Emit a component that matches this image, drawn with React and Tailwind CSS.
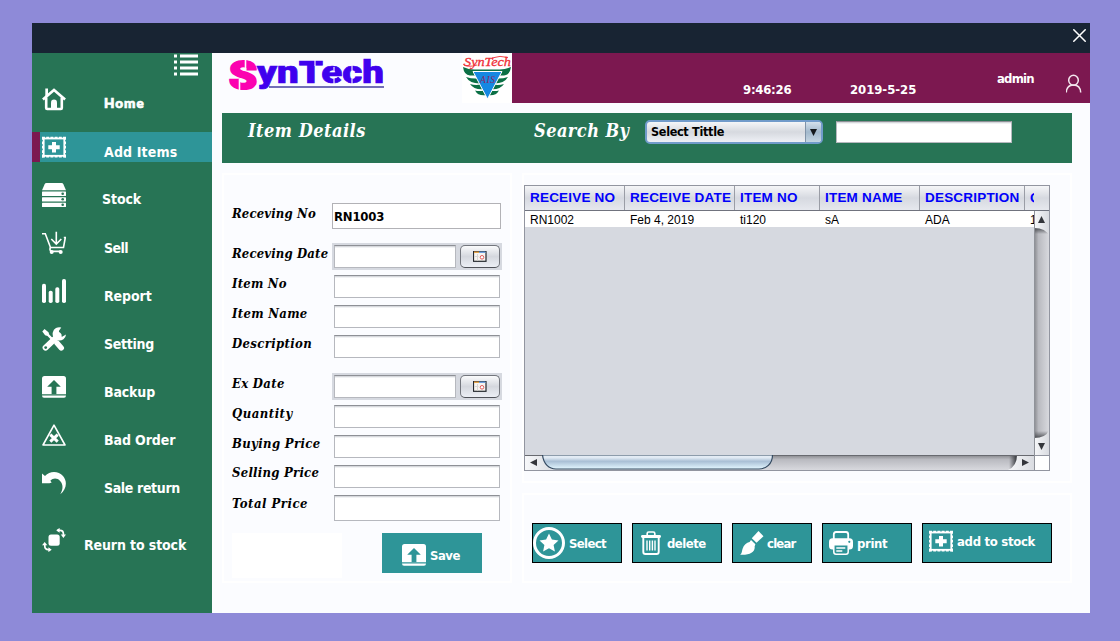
import React from "react";

const SANS_FACE = "font-['DejaVu_Sans_Condensed','DejaVu_Sans',sans-serif] font-bold [font-stretch:condensed]";
const SANS = `${SANS_FACE} tracking-[-0.2px]`;
const SERIF = "font-['DejaVu_Serif_Condensed','DejaVu_Serif',serif] font-bold italic [font-stretch:condensed]";

function HomeIcon() {
  return (
    <svg width="24" height="24" viewBox="0 0 24 24" fill="none" stroke="white">
      <path d="M.9 12.600 12 3l11.100 9.600" strokeWidth="2.600" />
      <path d="M4.200 10.500v10.600q0 .9.900.9h13.800q.9 0 .9-.9V10.500" strokeWidth="2.600" />
      <path d="M3.300 1.500v7.500h2.700V1.500z" fill="white" stroke="none" />
      <path d="M9 22v-6.200Q9 12.600 12 12.600t3 3.200V22z" fill="white" stroke="none" />
    </svg>
  );
}

function AddIcon() {
  return (
    <svg width="24" height="24" viewBox="0 0 24 24" fill="none" stroke="white">
      <rect x="1.700" y="3.500" width="20.600" height="17.300" strokeWidth="1.800" />
      <path d="M0 2.700h24M0 21.600h24" strokeWidth="1.900" strokeDasharray="3 1.200" />
      <path d="M.8 2v20.500M23.200 2v20.500" strokeWidth="1.700" strokeDasharray="2.800 1.600" />
      <path d="M12 7v10.600M6.300 12.300h11.400" strokeWidth="4" />
    </svg>
  );
}

function StockIcon() {
  return (
    <svg width="24" height="24" viewBox="0 0 24 24" fill="white">
      <path d="M4.500 0h15q1.400 0 2 1.400L24 7.300H0l2.500-5.900Q3.100 0 4.500 0z" />
      <rect x="0" y="8.600" width="24" height="4.400" rx=".5" />
      <rect x="0" y="14.200" width="24" height="4.200" rx=".5" />
      <rect x="0" y="19.700" width="24" height="4.300" rx=".5" />
      <g fill="#277455">
        <circle cx="20.700" cy="10.800" r="1.300" />
        <circle cx="20.700" cy="16.300" r="1.300" />
        <circle cx="20.700" cy="21.800" r="1.300" />
      </g>
    </svg>
  );
}

function SellIcon() {
  return (
    <svg width="24" height="24" viewBox="0 0 24 24" fill="none" stroke="white" strokeWidth="1.600">
      <path d="M0 2.800h3.300L8.500 16.500h13L23.300 6.500h-1.500" />
      <path d="M14.300 .8v12M9.300 8l5 5 5-5" />
      <path d="M8.500 16.500q-1.500 2.500 1 3.900h9" />
      <circle cx="9.700" cy="20.900" r="2" fill="white" stroke="none" />
      <circle cx="18.700" cy="20.900" r="2" fill="white" stroke="none" />
    </svg>
  );
}

function ReportIcon() {
  return (
    <svg width="24" height="24" viewBox="0 0 24 24" fill="white">
      <rect x="0" y="4.800" width="4" height="19.200" rx="1.800" />
      <rect x="6.700" y="11.700" width="4" height="12.300" rx="1.800" />
      <rect x="13.300" y="8.300" width="4" height="15.700" rx="1.800" />
      <rect x="20" y="0" width="4" height="24" rx="1.800" />
    </svg>
  );
}

function SettingIcon() {
  return (
    <svg width="24" height="24" viewBox="0 0 24 24" fill="none" stroke="white">
      <path d="M.3 4.500 2.500 2l4 3.200.7 2.400 5 5-1.700 1.700-5-5.200L3.100 8.200z" fill="white" stroke="none" />
      <path d="M15 16l4.300 5" strokeWidth="5.400" strokeLinecap="round" />
      <path d="M3.600 20.600 16.500 8.300" strokeWidth="6" strokeLinecap="round" />
      <path d="M19.300 .5a6.700 6.700 0 1 0 4.700 6.900l-3.900 2.300-3.200-2.300.1-3.700z" fill="white" stroke="none" />
      <circle cx="3.700" cy="20.600" r="1.400" fill="#277455" stroke="none" />
    </svg>
  );
}

function UploadIcon({ hole = "#277455" }) {
  return (
    <svg width="24" height="24" viewBox="0 0 24 24" fill="white">
      <path d="M2.500 1h19Q24 1 24 3.500v15.700H0V3.500Q0 1 2.500 1z" />
      <path d="M0 20.400h24q0 2.400-2 2.400H2Q0 22.800 0 20.400z" />
      <path d="M12 5 18.800 11.700H14.400V19.200H9.600V11.700H5.200z" fill={hole} />
    </svg>
  );
}

function BadOrderIcon() {
  return (
    <svg width="24" height="24" viewBox="0 0 24 24" fill="none" stroke="white">
      <path d="M12 2.200 23 22H1z" strokeWidth="1.600" strokeLinejoin="round" />
      <path d="M8.300 11.600l7.400 7M15.700 11.600l-7.400 7" strokeWidth="3" />
    </svg>
  );
}

function SaleReturnIcon() {
  return (
    <svg width="24" height="24" viewBox="0 0 24 24" fill="white">
      <path d="M0 2.500 3 5C8 -.5 16.500 0 21 4.900c4.700 5.500 3.500 13.200-2.700 18.400 3-5.500 2.900-10-.2-13.300-2.800-3-6.800-3.300-9.800-.2l1.400 1.700L7.500 12.300H0z" />
    </svg>
  );
}

function ReturnStockIcon() {
  return (
    <svg width="24" height="24" viewBox="0 0 24 24" fill="none" stroke="white" strokeWidth="1.700">
      <rect x="6.500" y="6.500" width="11.200" height="11.200" rx="2.500" fill="white" stroke="none" />
      <path d="M15.500 2.300h2.500q3.400 0 3.400 3.500v1.500" />
      <path d="M14.200 2.300l3.400-2.400v4.800zM21.400 10l-2.600-3.400H24z" fill="white" stroke="none" />
      <path d="M8 21.600H6.300q-3.500 0-3.500-3.600v-1.500" />
      <path d="M9.700 21.700l-3.300 2.400v-4.800zM2.700 13.900 0 17.300h5.300z" fill="white" stroke="none" />
    </svg>
  );
}

const HOME_FACE = "font-['Lato',sans-serif] font-black text-[13.5px] tracking-[1px] [-webkit-text-stroke:0.7px_white]";
const NAV_FACE = `text-[14px] ${SANS_FACE}`;

const NAV = [
  { label: "Home", Icon: HomeIcon, row: "", text: `ml-[38px] mt-[9px] ${HOME_FACE}` },
  { label: "Add Items", Icon: AddIcon, row: "mt-[18px] bg-[#2e9598]", text: `ml-[38px] mt-[10px] tracking-[0.15px] ${NAV_FACE}` },
  { label: "Stock", Icon: StockIcon, row: "mt-[18px]", text: `ml-9 mt-[9px] tracking-[-0.1px] ${NAV_FACE}` },
  { label: "Sell", Icon: SellIcon, row: "mt-[18px]", text: `ml-[38px] mt-[10px] tracking-[-0.6px] ${NAV_FACE}` },
  { label: "Report", Icon: ReportIcon, row: "mt-[18px]", text: `ml-[38px] mt-[10px] tracking-[-0.1px] ${NAV_FACE}` },
  { label: "Setting", Icon: SettingIcon, row: "mt-[18px]", text: `ml-[38px] mt-[10px] tracking-[-0.3px] ${NAV_FACE}` },
  { label: "Backup", Icon: UploadIcon, row: "mt-[18px]", text: `ml-[38px] mt-[10px] tracking-[-0.15px] ${NAV_FACE}` },
  { label: "Bad Order", Icon: BadOrderIcon, row: "mt-[18px]", text: `ml-[38px] mt-[10px] tracking-[-0.1px] ${NAV_FACE}` },
  { label: "Sale return", Icon: SaleReturnIcon, row: "mt-[18px]", text: `ml-[38px] mt-[10px] tracking-[-0.35px] ${NAV_FACE}` },
  { label: "Reurn to stock", Icon: ReturnStockIcon, row: "mt-[27px]", text: `ml-[18px] mt-[10px] tracking-[-0.12px] ${NAV_FACE}` },
];

function Sidebar() {
  return (
    <nav className="flex w-[180px] shrink-0 flex-col bg-[#277455]">
      <div className="flex h-[31px] justify-end pr-[14px]">
        <svg width="24" height="24" viewBox="0 0 24 24" fill="none" stroke="white" strokeWidth="3">
          <path d="M6 3h18M6 9h18M6 15h18M6 21h18" />
          <path d="M0 3h3M0 9h3M0 15h3M0 21h3" />
        </svg>
      </div>
      {NAV.map(({ label, Icon, row, text }, i) => (
        <div key={label} className={`flex h-[30px] items-start ${row}`}>
          <span className={i === 1 ? "h-full w-2 bg-[#7c1850]" : "h-full w-2"} />
          <span className="ml-0.5 mt-[3px] h-6 w-6 shrink-0"><Icon /></span>
          <span className={`whitespace-nowrap leading-5 text-white ${text}`}>{label}</span>
        </div>
      ))}
    </nav>
  );
}

function Logo() {
  return (
    <svg width="250" height="50" viewBox="0 0 250 50">
      <g fontFamily="Roboto, sans-serif" fontWeight="900">
        <text x="17" y="35.500" fontSize="39" textLength="28" lengthAdjust="spacingAndGlyphs" fill="#fb02b0" stroke="#fb02b0" strokeWidth="2.200">S</text>
        <text x="45" y="29.500" fontSize="31" textLength="127" lengthAdjust="spacingAndGlyphs" fill="#3f00ee" stroke="#3f00ee" strokeWidth=".7">ynTech</text>
      </g>
      <path d="M33.500 4v12M27.500 26v14" stroke="#fbfcff" strokeWidth="1.600" />
      <path d="M103 6v7M122 14v5M122 25v6M140 12v6M140 24v7" stroke="#fbfcff" strokeWidth="1.100" />
      <path d="M57 34h115" stroke="#45419f" strokeWidth="1.600" />
    </svg>
  );
}

function Emblem() {
  return (
    <svg width="50" height="50" viewBox="0 0 50 50" className="bg-white">
      <g fill="#0b7045">
        <path d="M1 14q7 3 13 2.500h22q6 .5 13-2.500-1 8-7 8.500H8Q2 22 1 14z" />
        <path d="M4 24q6 2 12 1.500l3 5Q8 31 4 24zM46 24q-6 2-12 1.500l-3 5Q42 31 46 24z" />
        <path d="M8 31q5 1.500 11 .5l2.500 4.700Q12 37 8 31zM42 31q-5 1.500-11 .5l-2.500 4.700Q38 37 42 31z" />
        <path d="M13 37.500q4 1 8.500.2l2.500 4.500q-8 1-11-4.700zM37 37.500q-4 1-8.500.2l-2.500 4.500q8 1 11-4.700z" />
      </g>
      <path d="M11 18.500h29L25.500 46z" fill="#1688e2" stroke="white" strokeWidth="1" />
      <text x="18" y="30" fontFamily="Liberation Serif, serif" fontStyle="italic" fontSize="9.500" textLength="15" fill="#8b2868">AIS</text>
      <text x="2" y="13" fontFamily="Liberation Serif, serif" fontStyle="italic" fontSize="13" textLength="47" lengthAdjust="spacingAndGlyphs" fill="#ef3038" stroke="#ef3038" strokeWidth=".3">SynTech</text>
      <path d="M1 11q4 4 14 1M30 5q8-3 16-.5" fill="none" stroke="#ef3038" strokeWidth=".9" />
    </svg>
  );
}

function Header() {
  return (
    <header className="flex h-[50px]">
      <div className="flex w-[300px] shrink-0"><Logo /><Emblem /></div>
      <div className={`flex flex-1 items-start bg-[#7c1850] text-[13px] leading-4 text-white ${SANS_FACE}`}>
        <span className="ml-[231px] mt-[29px] w-[107px] tracking-[-0.25px]">9:46:26</span>
        <span className="mt-[29px] w-[147px] tracking-[-0.05px]">2019-5-25</span>
        <span className="mt-[18px] w-[69px] tracking-[-0.8px]">admin</span>
        <svg width="16" height="19" viewBox="0 0 16 19" className="mt-[21px]" fill="none" stroke="#f3e6ee" strokeWidth="1.500">
          <ellipse cx="7.500" cy="6.300" rx="4.800" ry="5" />
          <path d="M.3 18.500q.4-7.500 7.200-7.500t7.200 7.500" />
        </svg>
      </div>
    </header>
  );
}

const INPUT = "border border-[#b6b8be] border-t-[#8e9096] bg-white shadow-[inset_0_1px_0_#d6d8dc,inset_0_2px_0_#f1f2f4]";

function SearchBar() {
  return (
    <div className="mx-[10px] mt-[10px] flex h-[50px] w-[850px] items-start bg-[#277455]">
      <span className={`ml-[26px] mt-[6px] w-[286px] whitespace-nowrap text-[18px] leading-6 tracking-[0.5px] text-white ${SERIF}`}>Item Details</span>
      <span className={`mt-[6px] w-[111px] whitespace-nowrap text-[18px] leading-6 tracking-[0.45px] text-white ${SERIF}`}>Search By</span>
      <div className="mt-[7px] flex h-[24px] w-[178px] items-center overflow-hidden rounded-[5px] border-2 border-[#719bca] bg-linear-to-b from-[#f5f6f8] via-[#d6d9df] to-[#eef0f5]">
        <span className={`flex-1 whitespace-nowrap pl-1 pt-px text-[12.5px] text-black ${SANS_FACE} tracking-[-0.3px]`}>Select Tittle</span>
        <span className="flex h-full w-4 items-center justify-center border-l border-[#8093a8] bg-linear-to-b from-[#d5e1ec] via-[#a2b8cc] to-[#c4d5e2]">
          <svg width="7" height="7" viewBox="0 0 7 7"><path d="M0 0h7L3.500 7z" fill="#15181c" /></svg>
        </span>
      </div>
      <div className={`ml-[13px] mt-2 h-[22px] w-[176px] ${INPUT}`} />
    </div>
  );
}

function DateField() {
  return (
    <div className="flex h-[27px] w-[170px] items-start gap-1 bg-[#d6d9e0] px-0.5 pt-0.5">
      <div className={`h-[23px] w-[122px] ${INPUT}`} />
      <div className="flex h-[23px] w-10 items-center justify-center rounded-[5px] border border-[#73767d] border-b-[#4f5258] bg-linear-to-b from-[#fafbfc] via-[#d5d8de] to-[#eceff5]">
        <svg width="14" height="11" viewBox="0 0 14 11">
          <rect x=".5" y=".5" width="12.500" height="9.800" fill="#f7f4f0" stroke="#24282e" strokeWidth="1.200" />
          <path d="M1 .5h5v1.500H1z" fill="#e3a34b" />
          <path d="M6 .5h6.500v1.500H6z" fill="#6fa2de" />
          <path d="M4.500 3v6.500M1.500 5.500h4" stroke="#d8d6d4" />
          <circle cx="9" cy="6.300" r="1.800" fill="white" stroke="#e0605c" />
        </svg>
      </div>
    </div>
  );
}

const FIELDS = [
  { label: "Receving No", kind: "value", row: "", text: "mt-px tracking-[0.15px]" },
  { label: "Receving Date", kind: "date", row: "mt-[14px]", text: "mt-px tracking-[0.15px]" },
  { label: "Item No", kind: "text", row: "mt-[5px]", text: "-mt-px tracking-[0.2px]" },
  { label: "Item Name", kind: "text", row: "mt-[7px]", text: "-mt-px tracking-[0.3px]" },
  { label: "Description", kind: "text", row: "mt-[7px]", text: "-mt-px tracking-[0.35px]" },
  { label: "Ex Date", kind: "date", row: "mt-[15px]", text: "mt-px tracking-[0.3px]" },
  { label: "Quantity", kind: "text", row: "mt-[5px]", text: "-mt-px tracking-[0.5px]" },
  { label: "Buying Price", kind: "text", row: "mt-[7px]", text: "-mt-px tracking-[0.35px]" },
  { label: "Selling Price", kind: "text", row: "mt-[7px]", text: "-mt-0.5 tracking-[0.25px]" },
  { label: "Total Price", kind: "tall", row: "mt-[7px]", text: "-mt-px tracking-[0.5px]" },
];

const ROW_HEIGHT = { value: "h-[26px]", date: "h-[27px]", text: "h-[23px]", tall: "h-[26px]" };

function ItemForm() {
  return (
    <section className="flex h-[410px] w-[290px] flex-col border-2 border-white pl-2 pt-[28px]">
      {FIELDS.map((f) => (
        <div key={f.label} className={`flex shrink-0 items-start ${ROW_HEIGHT[f.kind]} ${f.row}`}>
          <span className={`w-[100px] shrink-0 whitespace-nowrap text-[13px] leading-5 text-black ${SERIF} ${f.text}`}>{f.label}</span>
          {f.kind === "value" && (
            <div className={`flex h-[26px] w-[169px] items-center border border-[#b2b2b6] bg-white pl-px pt-px text-[13px] text-black ${SANS}`}>RN1003</div>
          )}
          {f.kind === "date" && <DateField />}
          {f.kind === "text" && <div className={`ml-0.5 h-[23px] w-[166px] ${INPUT}`} />}
          {f.kind === "tall" && <div className={`ml-0.5 h-[26px] w-[166px] ${INPUT}`} />}
        </div>
      ))}
      <div className="mt-3 flex shrink-0 items-start">
        <div className="h-[45px] w-[110px] bg-white" />
        <button className={`ml-10 flex h-10 w-[100px] items-center gap-1 bg-[#2e9598] pl-5 pt-1 text-[13px] text-white ${SANS_FACE} tracking-[-0.5px]`}>
          <UploadIcon hole="#2e9598" />
          <span className="pt-0.5">Save</span>
        </button>
      </div>
    </section>
  );
}

const COLS = "grid grid-cols-[100px_110px_85px_100px_105px_1fr]";

function ItemTable() {
  return (
    <div className="flex h-[286px] w-[526px] flex-col border border-[#9295a0] font-['Liberation_Sans',Arial,sans-serif]">
      <div className="h-[25px] shrink-0 border-b border-[#70737e] bg-linear-to-b from-[#f5f6f8] via-[#d6d9e0] to-[#e6e8ee]">
        <div className={`h-6 w-[509px] overflow-hidden text-[13.5px] font-bold leading-6 tracking-[0.2px] text-[#0000fa] ${COLS}`}>
          {["RECEIVE NO", "RECEIVE DATE", "ITEM NO", "ITEM NAME", "DESCRIPTION"].map((h) => (
            <span key={h} className="overflow-hidden whitespace-nowrap border-r border-[#9a9da6] pl-[5px]">{h}</span>
          ))}
          <span className="overflow-hidden pl-[5px]">Q</span>
        </div>
      </div>
      <div className="flex h-[244px] shrink-0">
        <div className="w-[509px] bg-[#d6d9e0]">
          <div className={`h-4 overflow-hidden bg-white text-[12px] leading-[18px] text-black ${COLS}`}>
            {["RN1002", "Feb 4, 2019", "ti120", "sA", "ADA", "1"].map((c, i) => (
              <span key={i} className="overflow-hidden whitespace-nowrap pl-[5px]">{c}</span>
            ))}
          </div>
        </div>
        <svg width="15" height="244" viewBox="0 0 15 244">
          <defs>
            <linearGradient id="vtrack"><stop offset="0" stopColor="#85868b" /><stop offset=".3" stopColor="#b9bac0" /><stop offset="1" stopColor="#d8d9de" /></linearGradient>
            <linearGradient id="cap"><stop offset="0" stopColor="#f7f8fa" /><stop offset="1" stopColor="#d9dbe0" /></linearGradient>
            <linearGradient id="vshadow" x1="0" y1="0" x2="0" y2="1"><stop offset="0" stopColor="#404247" /><stop offset="1" stopColor="#404247" stopOpacity="0" /></linearGradient>
          </defs>
          <rect width="15" height="244" fill="url(#vtrack)" />
          <rect y="16" width="15" height="7" fill="url(#vshadow)" />
          <rect y="-228" width="15" height="8" fill="url(#vshadow)" transform="scale(1 -1)" />
          <path d="M0 0h15v25Q12 17 0 17z" fill="url(#cap)" />
          <path d="M0 244h15v-25Q12 227 0 227z" fill="url(#cap)" />
          <path d="M7.500 5 11 12H4z" fill="#34363b" />
          <path d="M7.500 239 11 232H4z" fill="#34363b" />
          <path d="M.5 0v244" stroke="#8f9299" />
        </svg>
      </div>
      <div className="flex h-[15px] bg-white">
        <svg width="510" height="15" viewBox="0 0 510 15">
          <defs>
            <linearGradient id="htrack" x1="0" y1="0" x2="0" y2="1"><stop offset="0" stopColor="#85868b" /><stop offset=".3" stopColor="#b9bac0" /><stop offset="1" stopColor="#d8d9de" /></linearGradient>
            <linearGradient id="thumb" x1="0" y1="0" x2="0" y2="1"><stop offset="0" stopColor="#e8eff7" /><stop offset=".2" stopColor="#dfe9f3" /><stop offset=".45" stopColor="#a9bfd5" /><stop offset="1" stopColor="#e3f7ff" /></linearGradient>
            <linearGradient id="hshadow"><stop offset="0" stopColor="#404247" stopOpacity="0" /><stop offset="1" stopColor="#303237" /></linearGradient>
          </defs>
          <rect width="510" height="15" fill="url(#htrack)" />
          <rect x="484" width="8" height="15" fill="url(#hshadow)" />
          <path d="M0 0h18q1 11 12 15H0z" fill="url(#cap)" />
          <path d="M510 0h-18q0 11-9 15h27z" fill="url(#cap)" />
          <path d="M17.500 0C18.500 9 24 14 31 14H234C241 14 247.500 9 247.500 0z" fill="url(#thumb)" stroke="#344a61" strokeWidth="1.200" />
          <path d="M5 7.500 12 4v7zM504 7.500 497 4v7z" fill="#34363b" />
          <path d="M0 .5h17M248 .5h262" stroke="#686a70" />
          <path d="M509.500 0v15" stroke="#8f9299" />
        </svg>
        <div className="flex-1 border-t border-[#9295a0]" />
      </div>
    </div>
  );
}

function StarIcon() {
  return (
    <svg width="32" height="32" viewBox="0 0 32 32" fill="white">
      <circle cx="16" cy="16" r="14.500" fill="none" stroke="white" strokeWidth="3" />
      <path d="M16 6.500l2.900 6.100 6.600.8-4.900 4.500 1.300 6.600-5.900-3.300-5.900 3.300 1.300-6.600-4.900-4.500 6.600-.8z" />
    </svg>
  );
}

function TrashIcon() {
  return (
    <svg width="20" height="24" viewBox="0 0 20 24" fill="none" stroke="white">
      <path d="M6.200 4V2.500q0-1.500 1.500-1.500h4.600q1.500 0 1.500 1.500V4" strokeWidth="1.700" />
      <rect x="0" y="4" width="20" height="3" rx="1.400" fill="white" stroke="none" />
      <path d="M2.300 6v15q0 2 2 2h11.400q2 0 2-2V6" strokeWidth="1.900" />
      <path d="M6 9.500v10M8.700 9.500v10M11.400 9.500v10M14 9.500v10" strokeWidth="1.400" />
    </svg>
  );
}

function BrushIcon() {
  return (
    <svg width="24" height="24" viewBox="0 0 24 24" fill="white">
      <path d="M18.500 0 23.500 5.200 16.500 11.800 11.800 7.300z" />
      <path d="M11 9l4.400 4.200-.8 2.200c.9 5.500-4.600 9-14.400 8.400 1.900-1.500 1.500-3.500 2.300-5.800C3.700 14 6.500 11.800 9.600 11z" />
    </svg>
  );
}

function PrintIcon() {
  return (
    <svg width="24" height="24" viewBox="0 0 24 24" fill="none" stroke="white">
      <path d="M4.800 8V3.500Q4.800 1 7 1h10q2.200 0 2.200 2.500V8" strokeWidth="1.800" />
      <path d="M3.500 7.300h17Q24 7.300 24 10.800V15q0 3.500-3.500 3.500h-17Q0 18.500 0 15V10.800q0-3.500 3.500-3.500z" fill="white" stroke="none" />
      <path d="M4.800 13.700h14.400v7.300q0 2.200-2.200 2.200h-10q-2.200 0-2.200-2.200z" fill="#2e9598" strokeWidth="1.500" />
      <path d="M7.300 17h9M7.300 20h6" strokeWidth="1.500" />
      <circle cx="20.300" cy="10.800" r="1.100" fill="#2e9598" stroke="none" />
    </svg>
  );
}

const ACTIONS = [
  { label: "Select", Icon: StarIcon, box: "w-[90px] pl-0 gap-1 tracking-[-0.65px]" },
  { label: "delete", Icon: TrashIcon, box: "w-[90px] pl-2 gap-1.5 tracking-[-0.5px]" },
  { label: "clear", Icon: BrushIcon, box: "w-20 pl-[7px] gap-[3px] tracking-[-0.8px]" },
  { label: "print", Icon: PrintIcon, box: "w-[90px] pl-1.5 gap-1 tracking-[-0.35px]" },
  { label: "add to stock", Icon: AddIcon, box: "w-[130px] pl-1.5 pb-1 gap-1 tracking-[-0.3px]" },
];

export default function App() {
  return (
    <main className="flex h-[641px] w-[1120px] flex-col bg-[#8e8ad8] px-[32px] pt-[23px]">
      <div className="flex h-[590px] w-[1058px] shrink-0 flex-col">
        <div className="flex h-[30px] shrink-0 items-start justify-end bg-[#182433] pr-[4px] pt-[6px]">
          <svg width="13" height="13" viewBox="0 0 13 13" fill="none" stroke="white" strokeWidth="1.500"><path d="M.3 .3l12.400 12.400M12.700 .3.3 12.700" /></svg>
        </div>
        <div className="flex flex-1">
          <Sidebar />
          <div className="flex flex-1 flex-col bg-[#fbfcff]">
            <Header />
            <SearchBar />
            <div className="ml-[10px] mt-[10px] flex gap-[10px]">
              <ItemForm />
              <div className="flex flex-col gap-[10px]">
                <section className="h-[310px] w-[550px] border-2 border-white pt-[10px]">
                  <ItemTable />
                </section>
                <section className="flex h-[90px] w-[550px] items-start gap-[10px] border-2 border-white pl-2 pt-[28px]">
                  {ACTIONS.map(({ label, Icon, box }) => (
                    <button key={label} className={`flex h-10 shrink-0 items-center whitespace-nowrap border border-black bg-[#2e9598] text-[13px] text-white ${SANS_FACE} ${box}`}>
                      <Icon />
                      <span className="pt-px">{label}</span>
                    </button>
                  ))}
                </section>
              </div>
            </div>
          </div>
        </div>
      </div>
    </main>
  );
}
